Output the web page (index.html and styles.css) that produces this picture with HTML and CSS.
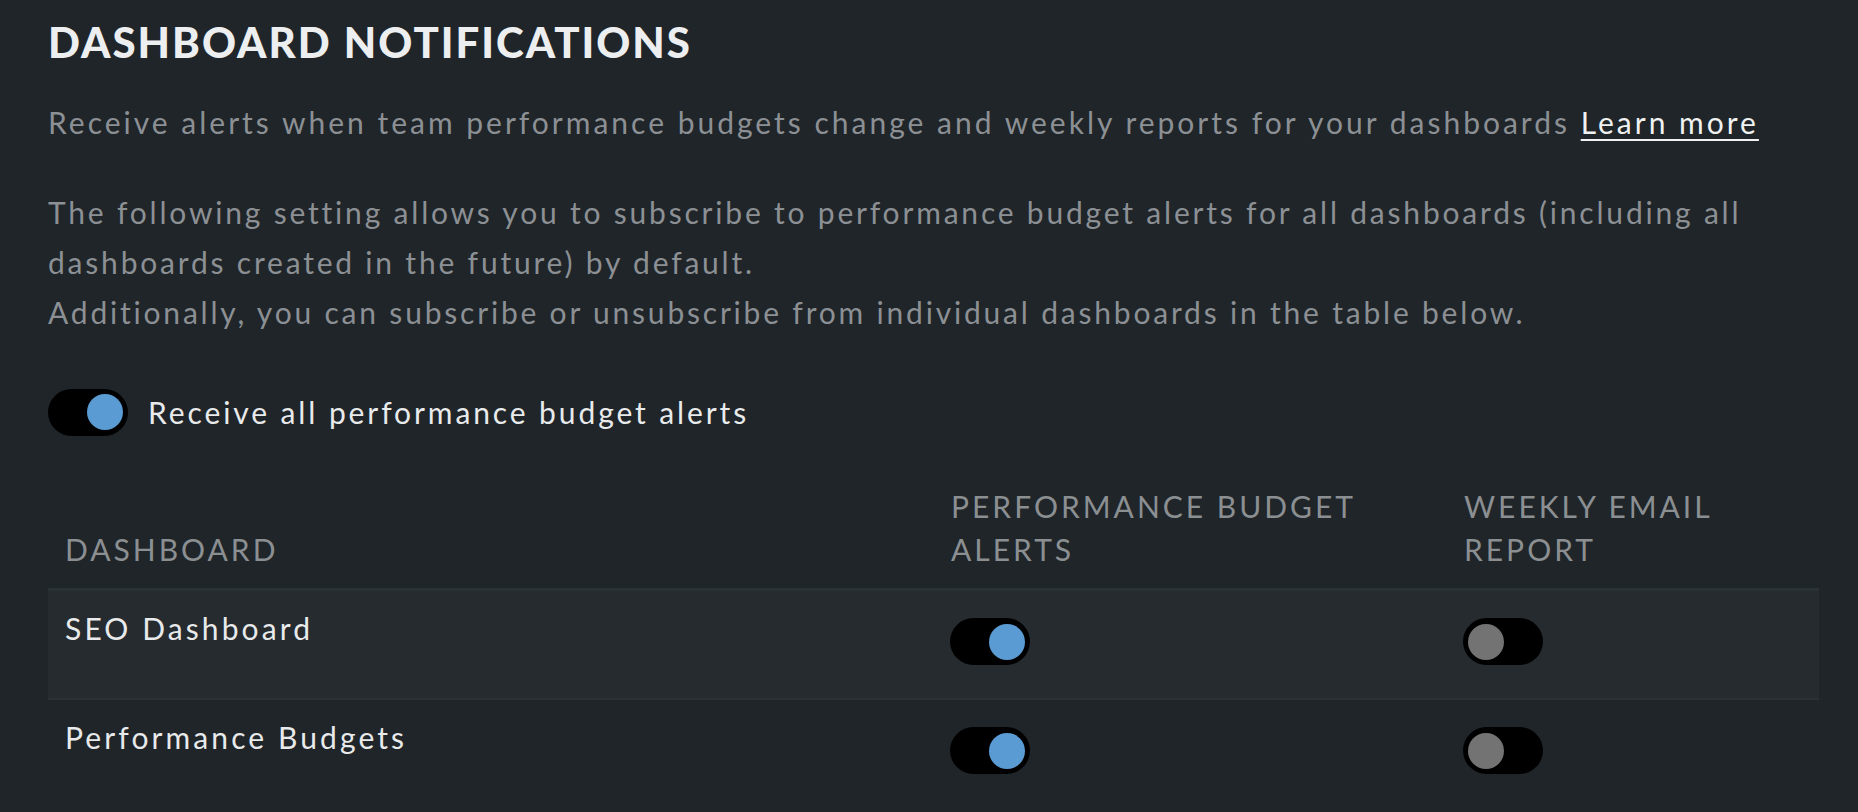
FILE: index.html
```html
<!DOCTYPE html>
<html lang="en">
<head>
<meta charset="utf-8">
<title>Dashboard notifications</title>
<link rel="stylesheet" href="styles.css">
</head>
<body>
<main class="page">
  <h1 class="title">DASHBOARD NOTIFICATIONS</h1>
  <p class="lead">Receive alerts when team performance budgets change and weekly reports for your dashboards <a class="link" href="#">Learn more</a></p>
  <p class="desc">The following setting allows you to subscribe to performance budget alerts for all dashboards (including all dashboards created in the future) by default.<br>Additionally, you can subscribe or unsubscribe from individual dashboards in the table below.</p>
  <div class="master">
    <span class="toggle is-on"><span class="knob"></span></span>
    <span class="master-label">Receive all performance budget alerts</span>
  </div>
  <table class="dash-table">
    <colgroup>
      <col class="col-name">
      <col class="col-alerts">
      <col class="col-report">
    </colgroup>
    <thead>
      <tr>
        <th>DASHBOARD</th>
        <th>PERFORMANCE BUDGET ALERTS</th>
        <th>WEEKLY EMAIL REPORT</th>
      </tr>
    </thead>
    <tbody>
      <tr class="row-alt">
        <td class="name-cell">SEO Dashboard</td>
        <td class="toggle-cell"><span class="toggle is-on"><span class="knob"></span></span></td>
        <td class="toggle-cell"><span class="toggle"><span class="knob"></span></span></td>
      </tr>
      <tr>
        <td class="name-cell">Performance Budgets</td>
        <td class="toggle-cell"><span class="toggle is-on"><span class="knob"></span></span></td>
        <td class="toggle-cell"><span class="toggle"><span class="knob"></span></span></td>
      </tr>
    </tbody>
  </table>
</main>
</body>
</html>
```
FILE: styles.css
```css
html, body {
  margin: 0;
  padding: 0;
  background: #1f2529;
}

body {
  font-family: "Lato", "Liberation Sans", sans-serif;
  color: #8c9094;
}

.page {
  padding: 17px 39px 0 48px;
}

.title {
  margin: 0;
  font-size: 42px;
  line-height: 50px;
  font-weight: 900;
  letter-spacing: 2px;
  color: #eceeef;
}

.lead,
.desc {
  margin: 0;
  font-size: 30px;
  line-height: 50px;
  letter-spacing: 3px;
  color: #8c9094;
}

.lead {
  margin-top: 30px;
}

.desc {
  margin-top: 40px;
  letter-spacing: 2.8px;
}

.link {
  color: #f0f1f1;
  text-decoration: underline;
  text-decoration-thickness: 2px;
  text-underline-offset: 5px;
}

.master {
  margin-top: 50px;
  display: flex;
  align-items: center;
  gap: 20px;
}

.master-label {
  font-size: 30px;
  line-height: 50px;
  letter-spacing: 2.9px;
  color: #e8eaeb;
}

.toggle {
  display: flex;
  align-items: center;
  justify-content: flex-start;
  box-sizing: border-box;
  width: 80px;
  height: 47px;
  padding: 0 5px;
  border-radius: 24px;
  background: #000;
  flex: none;
}

.toggle.is-on {
  justify-content: flex-end;
}

.knob {
  width: 36px;
  height: 36px;
  border-radius: 50%;
  background: #737373;
}

.toggle.is-on .knob {
  background: #5b9bd3;
}

.dash-table {
  margin-top: 48px;
  width: 100%;
  border-collapse: separate;
  border-spacing: 0;
  table-layout: fixed;
}

.col-name { width: 886px; }
.col-alerts { width: 513px; }

.dash-table th {
  text-align: left;
  vertical-align: bottom;
  font-weight: 400;
  font-size: 30px;
  line-height: 43px;
  letter-spacing: 3px;
  color: #8b8f92;
  padding: 0 16px 17px 17px;
  border-bottom: 3px solid #2b3236;
}

.dash-table td {
  vertical-align: top;
  padding: 12px 16px 0 17px;
  border-bottom: 2px solid #2b3236;
}

.dash-table tbody tr:last-child td {
  border-bottom: none;
}

.row-alt td {
  background: #252b2f;
}

.name-cell {
  font-size: 30px;
  line-height: 50px;
  letter-spacing: 3.1px;
  color: #e8eaeb;
  padding-bottom: 45px !important;
}

.dash-table td.toggle-cell {
  padding-left: 16px;
  padding-bottom: 33px;
}

.toggle-cell .toggle {
  margin-top: 15px;
}
```
